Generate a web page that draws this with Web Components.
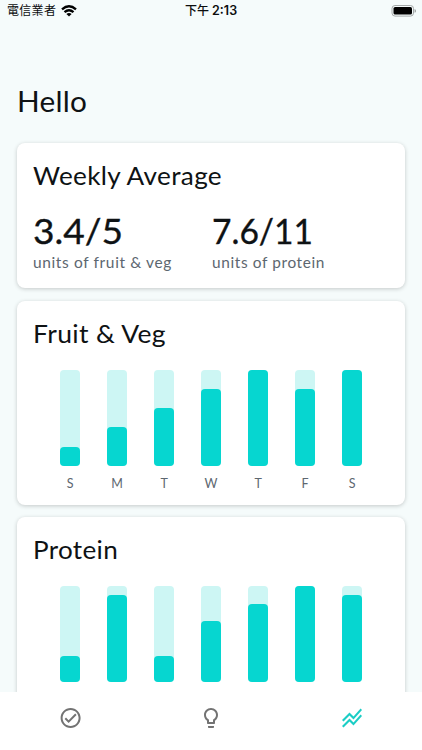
<!DOCTYPE html>
<html lang="zh-Hant">
<head>
<meta charset="utf-8">
<meta name="viewport" content="width=device-width, initial-scale=1">
<title>Hello</title>
<style>
    html, body{
        margin: 0;
        height: 100%;
        overflow: hidden;
        background: #f5fbfb;
    }
</style>
</head>
<body>
<habit-app></habit-app>
<script>
// one line of text set to a given width
class TextLine extends HTMLElement
{
    constructor() {
        super()
        this._shadowRoot = this.attachShadow({ mode: 'open' })
    }
    connectedCallback(){
        const width = this.getAttribute('width')
        const size = this.getAttribute('size')
        const stroke = this.getAttribute('stroke') || 0
        const spacing = this.getAttribute('spacing') || 0
        const height = Math.round(size * 1.25)
        const text = this.getAttribute('text').replace('&', '&amp;')
        this._shadowRoot.innerHTML =
        `
            <style>
                :host{
                    display: block;
                    height: ${height}px;
                }
                svg{
                    display: block;
                    overflow: visible;
                }
                text{
                    font-family: Lato, "Noto Sans", sans-serif;
                    font-size: ${size}px;
                    letter-spacing: ${spacing}px;
                    fill: currentColor;
                    stroke: currentColor;
                    stroke-width: ${stroke}px;
                }
            </style>
            <svg width="${width}" height="${height}">
                <text x="0" y="${size}" textLength="${width}" lengthAdjust="spacingAndGlyphs">${text}</text>
            </svg>
        `
    }
}
window.customElements.define('text-line', TextLine)

class StatusBar extends HTMLElement
{
    constructor() {
        super()
        this._shadowRoot = this.attachShadow({ mode: 'open' })
    }
    connectedCallback(){
        this._shadowRoot.innerHTML =
        `
            <style>
                :host{
                    display: grid;
                    grid-template-columns: 1fr auto 1fr;
                    align-items: center;
                    height: 22px;
                    padding: 0 6px 0 7px;
                    color: #0b0d0e;
                    font: 12px/22px Inter, "Noto Sans CJK TC", sans-serif;
                }
                .carrier{
                    display: flex;
                    align-items: center;
                    gap: 5px;
                    letter-spacing: 0.3px;
                }
                .time{
                    margin-left: -1px;
                    font-size: 12.5px;
                    font-weight: 600;
                }
                .time span{
                    font-size: 12px;
                    font-weight: 500;
                }
                .battery{
                    justify-self: end;
                }
                svg{
                    display: block;
                }
            </style>
            <div class="carrier">
                電信業者
                <svg width="16" height="12" viewBox="0 0 16 12" fill="none" stroke="#000" stroke-width="2.3">
                    <path d="M1 4.4Q8 -1.9 15 4.4M3.5 7.2Q8 3.3 12.5 7.2"/>
                    <path d="M8 11.5L5.4 8.9Q8 6.9 10.6 8.9Z" fill="#000" stroke="none"/>
                </svg>
            </div>
            <div class="time"><span>下午</span> 2:13</div>
            <svg class="battery" width="25" height="12" viewBox="0 0 25 12">
                <rect x="1" y="0.5" width="21.5" height="10.6" rx="3" fill="none" stroke="#a4a9a9"/>
                <rect x="2.5" y="2" width="18.5" height="7.6" rx="1.6"/>
                <path d="M23.6 4v3.8q1.3-.6 1.3-1.9t-1.3-1.9z" fill="#8c9191"/>
            </svg>
        `
    }
}
window.customElements.define('status-bar', StatusBar)

class InfoCard extends HTMLElement
{
    constructor() {
        super()
        this._shadowRoot = this.attachShadow({ mode: 'open' })
    }
    connectedCallback(){
        this._shadowRoot.innerHTML =
        `
            <style>
                :host{
                    display: block;
                    box-sizing: border-box;
                    padding: 18px 16.5px 0;
                    border-radius: 8px;
                    background: #fff;
                    box-shadow: 0 1px 4px rgba(0, 0, 0, 0.2);
                }
            </style>
            <text-line text="${this.getAttribute('heading').replace('&', '&amp;')}" width="${this.getAttribute('heading-width')}" size="24.3" spacing="0.3"></text-line>
            <slot></slot>
        `
    }
}
window.customElements.define('info-card', InfoCard)

class AverageStat extends HTMLElement
{
    constructor() {
        super()
        this._shadowRoot = this.attachShadow({ mode: 'open' })
    }
    connectedCallback(){
        this._shadowRoot.innerHTML =
        `
            <style>
                :host{
                    display: block;
                }
                .unit{
                    margin-top: 1px;
                    color: #5d6770;
                }
            </style>
            <text-line text="${this.getAttribute('value')}" width="${this.getAttribute('value-width')}" size="35.5" stroke="0.35"></text-line>
            <text-line class="unit" text="${this.getAttribute('unit').replace('&', '&amp;')}" width="${this.getAttribute('unit-width')}" size="15" spacing="0.6"></text-line>
        `
    }
}
window.customElements.define('average-stat', AverageStat)

class WeekChart extends HTMLElement
{
    constructor() {
        super()
        this._shadowRoot = this.attachShadow({ mode: 'open' })
    }
    connectedCallback(){
        const max = this.getAttribute('max')
        const values = this.getAttribute('values').split(',')
        const days = (this.getAttribute('days') || '').split(',')
        this._shadowRoot.innerHTML =
        `
            <style>
                :host{
                    display: grid;
                    grid-template-columns: repeat(7, 47px);
                    margin: 21px 0 0 13.2px;
                }
                .day{
                    display: flex;
                    flex-direction: column;
                    align-items: center;
                    gap: 9px;
                    color: #5d6770;
                    font: 12.5px/17px Lato, sans-serif;
                }
                .track{
                    display: flex;
                    align-items: flex-end;
                    width: 20.2px;
                    height: 96.2px;
                    border-radius: 4px;
                    background: #cdf6f4;
                }
                .bar{
                    width: 100%;
                    border-radius: 4px;
                    background: #06d6d0;
                }
            </style>
            ${values.map((value, i) => `
                <div class="day">
                    <div class="track"><div class="bar" style="height: ${value / max * 100}%"></div></div>
                    ${days[i] ? `<span>${days[i]}</span>` : ''}
                </div>
            `).join('')}
        `
    }
}
window.customElements.define('week-chart', WeekChart)

const icons = {
    check: 'M12 2C6.48 2 2 6.48 2 12s4.48 10 10 10 10-4.48 10-10S17.52 2 12 2zm0 18c-4.41 0-8-3.59-8-8s3.59-8 8-8 8 3.59 8 8-3.59 8-8 8zm4.59-12.42L10 14.17l-2.59-2.58L6 13l4 4 8-8z',
    bulb: 'M9 21c0 .55.45 1 1 1h4c.55 0 1-.45 1-1v-1H9v1zm3-19C8.14 2 5 5.14 5 9c0 2.38 1.19 4.47 3 5.74V17c0 .55.45 1 1 1h6c.55 0 1-.45 1-1v-2.26c1.81-1.27 3-3.36 3-5.74 0-3.86-3.14-7-7-7zm2.85 11.1l-.85.6V16h-4v-2.3l-.85-.6C7.8 12.16 7 10.63 7 9c0-2.76 2.24-5 5-5s5 2.24 5 5c0 1.63-.8 3.16-2.15 4.1z',
    chart: 'M2 19.99l7.5-7.51 4 4 7.09-7.97L22 9.92l-8.5 9.56-4-4-6 6.01-1.5-1.5zm1.5-4.5l6-6.01 4 4L22 3.92l-1.41-1.41-7.09 7.97-4-4L2 13.99l1.5 1.5z'
}
class TabBar extends HTMLElement
{
    constructor() {
        super()
        this._shadowRoot = this.attachShadow({ mode: 'open' })
    }
    connectedCallback(){
        this._shadowRoot.innerHTML =
        `
            <style>
                :host{
                    display: grid;
                    grid-template-columns: repeat(3, 140.6px);
                    justify-content: center;
                    justify-items: center;
                    height: 58.5px;
                    box-sizing: border-box;
                    padding-top: 14.5px;
                    background: #fff;
                }
                svg{
                    fill: #737373;
                }
                .active{
                    fill: #1bcdc5;
                }
            </style>
            ${Object.keys(icons).map(name => `
                <svg class="${name === 'chart' ? 'active' : ''}" width="24" height="24" viewBox="0 0 24 24"><path d="${icons[name]}" ${name === 'check' ? 'transform="translate(0.6 0)"' : ''}/></svg>
            `).join('')}
        `
    }
}
window.customElements.define('tab-bar', TabBar)

class HabitApp extends HTMLElement
{
    constructor() {
        super()
        this._shadowRoot = this.attachShadow({ mode: 'open' })
    }
    connectedCallback(){
        this._shadowRoot.innerHTML =
        `
            <style>
                :host{
                    display: flex;
                    flex-direction: column;
                    width: 422px;
                    height: 750px;
                    overflow: hidden;
                    color: #0e1214;
                }
                main{
                    flex: 1;
                    min-height: 0;
                    overflow: hidden;
                    padding: 61.5px 16.6px 0 16.9px;
                }
                .cards{
                    display: flex;
                    flex-direction: column;
                    gap: 12.3px;
                    margin-top: 24.3px;
                }
                .average{
                    height: 145.6px;
                }
                .chart{
                    height: 204.2px;
                    flex: none;
                }
                .stats{
                    display: grid;
                    grid-template-columns: 178.5px 1fr;
                    margin-top: 17.5px;
                }
            </style>
            <status-bar></status-bar>
            <main>
                <text-line text="Hello" width="70" size="28" spacing="0.2"></text-line>
                <div class="cards">
                    <info-card class="average" heading="Weekly Average" heading-width="189">
                        <div class="stats">
                            <average-stat value="3.4/5" value-width="90" unit="units of fruit & veg" unit-width="139"></average-stat>
                            <average-stat value="7.6/11" value-width="101" unit="units of protein" unit-width="113"></average-stat>
                        </div>
                    </info-card>
                    <info-card class="chart" heading="Fruit & Veg" heading-width="133">
                        <week-chart max="5" values="1,2,3,4,5,4,5" days="S,M,T,W,T,F,S"></week-chart>
                    </info-card>
                    <info-card class="chart" heading="Protein" heading-width="85">
                        <week-chart max="11" values="3,10,3,7,9,11,10"></week-chart>
                    </info-card>
                </div>
            </main>
            <tab-bar></tab-bar>
        `
    }
}
window.customElements.define('habit-app', HabitApp)
</script>
</body>
</html>
